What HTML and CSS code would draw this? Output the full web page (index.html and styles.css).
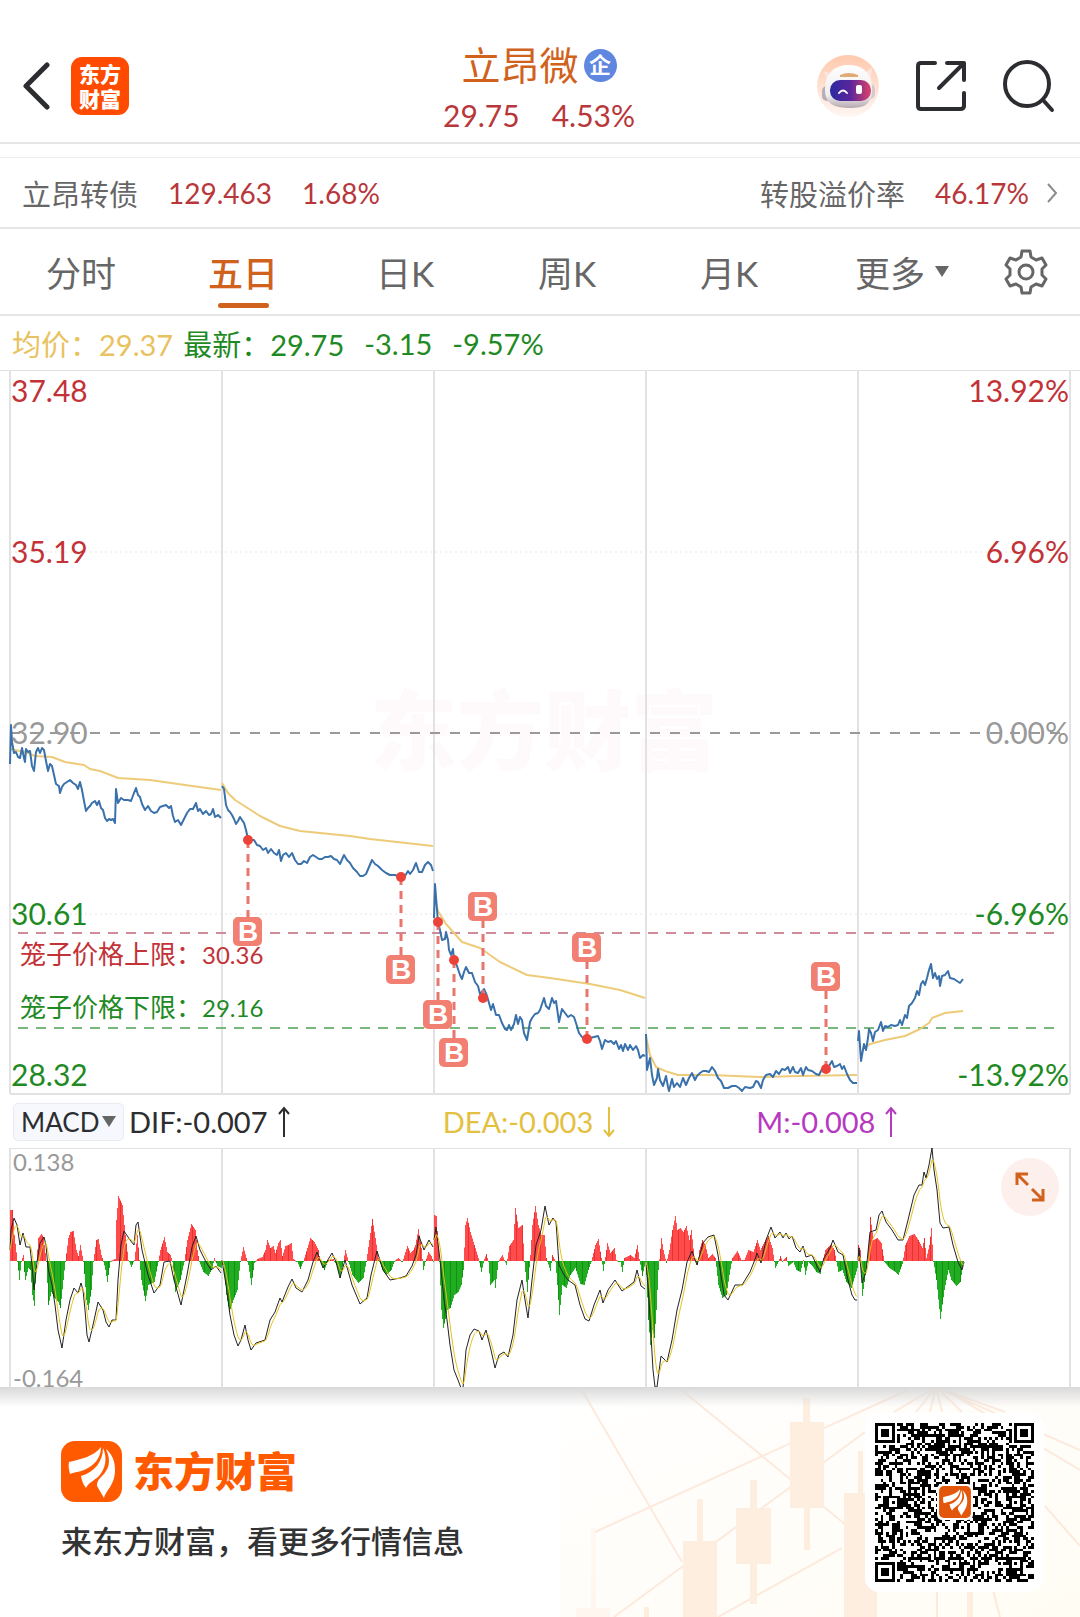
FILE: index.html
```html
<!DOCTYPE html>
<html lang="zh-CN">
<head>
  <meta charset="utf-8">
  <meta name="viewport" content="width=device-width, initial-scale=1">
  <title>立昂微 - 东方财富</title>
  <link rel="stylesheet" href="styles.css">
</head>
<body>
  <header class="topbar">
    <div class="side">
      <button class="icon-btn" aria-label="返回">
        <svg width="28" height="48" viewBox="0 0 28 48"><path d="M25 3 4 24 25 45" fill="none" stroke="#2b2d30" stroke-width="5" stroke-linecap="round" stroke-linejoin="round"/></svg>
      </button>
      <div class="app-badge"><span>东方</span><span>财富</span></div>
    </div>
    <div class="stock">
      <h1>立昂微<span class="tag">企</span></h1>
      <p class="quote up"><span>29.75</span><span>4.53%</span></p>
    </div>
    <div class="side right">
      <button class="icon-btn" aria-label="智能助手">
        <svg width="64" height="64" viewBox="0 0 64 64">
          <defs>
            <linearGradient id="halo" x1="0" y1="0" x2="0" y2="1"><stop offset="0" stop-color="#ffc9ae"/><stop offset="1" stop-color="#fff6f3"/></linearGradient>
            <linearGradient id="shell" x1="0" y1="0" x2="0" y2="1"><stop offset="0" stop-color="#ffffff"/><stop offset=".7" stop-color="#f0ecef"/><stop offset="1" stop-color="#b5a9b0"/></linearGradient>
            <linearGradient id="visor" x1="0" y1="0" x2="1" y2="0"><stop offset="0" stop-color="#2c2aa0"/><stop offset=".5" stop-color="#5b259c"/><stop offset="1" stop-color="#df4368"/></linearGradient>
          </defs>
          <circle cx="32" cy="32" r="31" fill="url(#halo)"/>
          <path d="M8 17q5 1 10 7l-6 7zM56 14q-6 2-9 10l7 7z" fill="#f8e7e2"/>
          <rect x="6" y="32" width="10" height="15" rx="5" fill="#b7adb6"/>
          <rect x="49" y="30" width="10" height="15" rx="5" fill="#d3cbd1"/>
          <path d="M9 36C9 18 20 11 33 11s23 8 23 24-8 19-22 19-25-3-25-18z" fill="url(#shell)"/>
          <path d="M24 21q9-4 18 0v2H24z" fill="#dfac76"/>
          <rect x="14" y="26" width="41" height="21" rx="10" fill="url(#visor)"/>
          <path d="M23 39q4-5 8 0" fill="none" stroke="#fff" stroke-width="2" stroke-linecap="round"/>
          <rect x="40" y="31" width="6" height="9" rx="2" fill="#fff"/>
        </svg>
      </button>
      <button class="icon-btn" aria-label="分享">
        <svg width="52" height="52" viewBox="0 0 52 52"><g fill="none" stroke="#2b2d30" stroke-width="4" stroke-linecap="round" stroke-linejoin="round"><path d="M20 3H6Q3 3 3 6v40q0 3 3 3h39q4 0 4-3V33"/><path d="M32 3h17v17M48 4 24 28"/></g></svg>
      </button>
      <button class="icon-btn" aria-label="搜索">
        <svg width="54" height="54" viewBox="0 0 54 54"><g fill="none" stroke="#2b2d30" stroke-width="4" stroke-linecap="round"><circle cx="25" cy="25" r="22"/><path d="m41 41 9 10"/></g></svg>
      </button>
    </div>
  </header>

  <a class="bond" href="#bond">
    <span class="name">立昂转债</span><span class="up">129.463</span><span class="up">1.68%</span>
    <span class="name push">转股溢价率</span><span class="up">46.17%</span>
    <svg width="12" height="20" viewBox="0 0 12 20"><path d="m2 1 8 9-8 9" fill="none" stroke="#8c8c8c" stroke-width="2"/></svg>
  </a>

  <nav class="tabs">
    <button>分时</button>
    <button class="active">五日</button>
    <button>日K</button>
    <button>周K</button>
    <button>月K</button>
    <button class="more">更多<i class="caret"></i></button>
    <button class="gear" aria-label="设置">
      <svg width="46" height="46" viewBox="0 0 46 46"><g fill="none" stroke="#666" stroke-width="3" stroke-linejoin="round"><path d="M19 2h8l1 6 5 3 6-2 4 7-4 4v6l4 4-4 7-6-2-5 3-1 6h-8l-1-6-5-3-6 2-4-7 4-4v-6l-4-4 4-7 6 2 5-3z"/><circle cx="23" cy="23" r="7"/></g></svg>
    </button>
  </nav>

  <div class="summary">
    <span class="avg">均价：29.37</span>
    <span class="down">最新：29.75</span>
    <span class="down">-3.15</span>
    <span class="down">-9.57%</span>
  </div>

  <svg class="chart" viewBox="0 370 1080 725">
    <text class="watermark" x="544" y="764" text-anchor="middle">东方财富</text>
    <g class="grid">
      <path d="M0 370H1080M10 1094H1070M10 370V1094M222 370V1094M434 370V1094M646 370V1094M858 370V1094M1070 370V1094"/>
      <path class="dots" d="M10 552H1070M10 914H1070"/>
    </g>
    <path class="base-line" d="M10 733H1070"/>
    <path class="limit-up" d="M18 933H1055"/>
    <path class="limit-down" d="M18 1028H1055"/>
    <g class="limit-text">
      <text class="up" x="20" y="964">笼子价格上限：<tspan>30.36</tspan></text>
      <text class="down" x="20" y="1017">笼子价格下限：<tspan>29.16</tspan></text>
    </g>
    <g class="axis">
      <text class="up" x="11" y="402">37.48</text>
      <text class="up" x="11" y="563">35.19</text>
      <text class="flat" x="11" y="744">32.90</text>
      <text class="down" x="11" y="925">30.61</text>
      <text class="down" x="11" y="1086">28.32</text>
    </g>
    <g class="axis" text-anchor="end">
      <text class="up" x="1069" y="402">13.92%</text>
      <text class="up" x="1069" y="563">6.96%</text>
      <text class="flat" x="1069" y="744">0.00%</text>
      <text class="down" x="1069" y="925">-6.96%</text>
      <text class="down" x="1069" y="1086">-13.92%</text>
    </g>
    <g id="avgLines" class="line avg-line"></g>
    <g id="priceLines" class="line price-line"></g>
    <g id="marks"></g>
  </svg>

  <div class="indicator">
    <label class="picker">
      <select aria-label="指标"><option>MACD</option><option>KDJ</option></select>
      <i class="caret"></i>
    </label>
    <div class="values">
      <span class="dif">DIF:-0.007<svg width="14" height="32" viewBox="0 0 14 32"><path d="M7 31V2M2 8l5-6 5 6"/></svg></span>
      <span class="dea">DEA:-0.003<svg width="14" height="32" viewBox="0 0 14 32"><path d="M7 1v29M2 24l5 6 5-6"/></svg></span>
      <span class="macd">M:-0.008<svg width="14" height="32" viewBox="0 0 14 32"><path d="M7 31V2M2 8l5-6 5 6"/></svg></span>
    </div>
  </div>

  <div class="macd-chart">
    <svg class="chart" viewBox="0 1148 1080 239">
      <path class="grid" d="M10 1148H1070M10 1148V1387M222 1148V1387M434 1148V1387M646 1148V1387M858 1148V1387M1070 1148V1387"/>
      <g class="range flat"><text x="13" y="1171">0.138</text><text x="13" y="1387">-0.164</text></g>
      <g id="bars"></g>
      <g id="difLines" class="line dif-line"></g>
      <g id="deaLines" class="line dea-line"></g>
    </svg>
    <button class="expand" aria-label="全屏">
      <svg width="30" height="30" viewBox="0 0 30 30"><path d="M13 2H2v11M3 3l10 10M28 17v11H17M27 27 17 17" fill="none" stroke="#d0621d" stroke-width="3"/></svg>
    </button>
  </div>

  <footer class="promo">
    <svg class="promo-bg" width="520" height="230" viewBox="560 1387 520 230">
      <defs><linearGradient id="warm" x1="0" y1="0" x2="1" y2="1"><stop offset="0" stop-color="#fff"/><stop offset=".5" stop-color="#fffdf9"/><stop offset="1" stop-color="#fffdf3"/></linearGradient></defs>
      <path fill="url(#warm)" d="M560 1387h520v230H560z"/>
      <g fill="none" stroke="#fdeadd" stroke-width="2">
        <path d="M583 1392 682 1562M678 1387 846 1525M595 1532 908 1390M614 1617 865 1432M718 1617 842 1548M935 1387 1080 1450M940 1387 1080 1470M1045 1506 1080 1546M936 1387 894 1412M936 1387 916 1412M936 1387 930 1412M936 1387 942 1412M936 1387 962 1412M936 1387 1005 1412M937 1590V1617M993 1590 1000 1617"/>
      </g>
      <g fill="#feeee0">
        <path d="M803 1398h7v24h14v86h-14v42h-6v-42h-14v-86h13zM750 1480h7v28h14v56h-14v40h-7v-40H736v-56h14zM697 1499h6v42h14v76h-34v-76h14zM858 1451h5v42h14v124h-33V1493h14zM967 1592h6v25h-6zM644 1607h5v10h-5z"/>
        <path opacity=".4" d="M591 1528h5v80h14v9h-34v-9h15z"/>
      </g>
    </svg>
    <div class="brand">
      <div class="brand-row">
        <svg width="61" height="61" viewBox="0 0 61 61">
          <rect width="61" height="61" rx="14" fill="#ff5a00"/>
          <g id="feather" fill="#fff">
            <path d="M8 21C20 18 32 16 40 6 40 17 33 25 23 29 18 31 14 31 9 33 8 29 7 25 8 21z"/>
            <path d="M42 7C42 20 34 31 20 35 21 40 22 43 25 47 27 42 34 39 38 35 44 28 47 18 42 7z"/>
            <path d="M45 8C51 21 47 29 41 35 37 39 36 41 36 45L43 57C45 49 54 44 54 29 54 20 51 13 45 8z"/>
          </g>
        </svg>
        <strong>东方财富</strong>
      </div>
      <p>来东方财富，看更多行情信息</p>
    </div>
    <div class="qr">
      <svg id="qr" width="159" height="159" viewBox="0 0 57 57" role="img" aria-label="二维码"></svg>
      <svg class="qr-logo" width="36" height="36" viewBox="-4 -4 69 69"><rect x="-4" y="-4" width="69" height="69" rx="10" fill="#fff"/><rect width="61" height="61" rx="9" fill="#e2570b"/><use href="#feather"/></svg>
    </div>
  </footer>

  <script>
    // one string per trading day, "x,y x,y ..."
    const price = [
      "10,764 11,725 12,742 14,753 16,752 18,757 20,758 22,748 24,758 25,762 26,749 28,752 30,751 32,766 34,771 36,752 38,748 40,753 42,748 44,750 46,761 48,771 50,764 52,766 54,775 56,784 59,786 60,793 62,787 64,784 67,782 70,780 73,783 76,785 78,789 80,782 82,790 84,801 86,811 88,808 90,806 92,803 95,801 97,805 99,801 101,808 103,810 105,818 107,821 109,819 111,820 113,819 115,823 116,789 118,803 121,798 124,800 128,800 131,801 134,793 136,788 138,795 140,797 142,804 145,810 148,806 151,811 154,813 157,812 160,807 163,806 166,805 169,808 171,806 173,816 175,822 178,820 181,825 184,819 187,813 190,809 193,809 196,803 198,811 200,809 203,814 206,811 209,815 211,814 213,809 215,817 218,815 221,818",
      "222,786 224,789 226,805 228,810 230,812 232,815 234,819 236,824 238,821 240,817 242,820 244,823 246,830 248,839 251,840 254,840 257,845 260,846 263,850 266,848 268,853 271,849 274,853 277,855 279,850 281,861 283,855 286,853 289,857 292,853 295,860 298,864 301,864 304,861 307,863 310,857 313,855 316,857 319,859 322,859 325,857 328,857 331,856 334,859 337,860 340,864 344,855 347,860 350,863 353,868 357,872 360,876 363,876 366,874 369,867 372,860 375,864 378,866 382,870 386,873 390,875 395,875 401,877 405,876 408,871 410,874 413,870 416,863 419,872 422,872 425,865 428,862 431,865 433,871",
      "434,918 435,884 437,910 438,922 440,930 442,940 445,939 446,932 448,940 449,950 451,955 453,949 454,960 457,966 460,975 462,979 464,972 466,967 469,973 472,973 475,982 478,986 480,994 484,989 487,996 489,1003 491,1010 493,1004 496,1015 499,1015 502,1023 505,1029 507,1030 509,1025 511,1030 514,1024 516,1015 518,1024 520,1017 522,1020 524,1033 527,1040 530,1022 532,1018 535,1014 538,1013 540,1010 542,1004 544,998 546,1006 549,1009 552,998 554,1003 556,1001 559,1022 562,1009 565,1013 568,1017 571,1015 574,1017 576,1023 579,1033 582,1037 586,1038 590,1038 594,1037 598,1036 600,1041 602,1049 605,1040 608,1042 611,1041 614,1044 616,1041 619,1049 621,1045 623,1051 625,1044 628,1050 630,1045 633,1050 636,1046 638,1050 640,1058 643,1055 645,1056",
      "646,1034 647,1070 650,1058 652,1075 654,1085 657,1078 658,1069 660,1080 663,1086 666,1076 668,1087 669,1091 672,1079 674,1087 677,1083 680,1087 683,1078 686,1085 689,1078 692,1073 695,1080 697,1076 700,1073 703,1071 706,1071 709,1072 712,1067 715,1071 718,1078 721,1081 724,1088 728,1088 732,1086 736,1086 739,1088 742,1091 745,1087 750,1088 753,1087 756,1081 758,1082 761,1088 763,1080 766,1075 770,1074 773,1077 776,1071 779,1074 782,1069 785,1070 788,1067 790,1073 793,1067 795,1072 798,1073 801,1068 803,1075 806,1067 808,1070 812,1071 816,1074 819,1075 822,1069 826,1068 829,1066 832,1061 834,1067 837,1066 840,1064 842,1069 844,1066 847,1074 850,1080 853,1083 857,1083",
      "858,1041 859,1031 861,1061 864,1044 866,1050 868,1038 869,1029 871,1033 873,1041 875,1032 878,1030 881,1022 883,1031 885,1026 888,1027 891,1025 895,1026 898,1025 900,1020 902,1025 905,1015 907,1018 909,1006 912,1003 915,998 917,991 919,995 921,984 923,981 925,985 927,978 929,970 931,964 933,978 935,973 937,979 939,976 940,986 942,976 945,975 948,971 950,978 954,979 957,981 960,983 963,979"
    ];
    const average = [
      "10,749 25,752 35,756 52,757 65,762 84,765 90,769 100,771 118,778 150,780 185,785 221,790",
      "222,783 228,793 235,800 246,807 260,816 280,826 300,831 320,833 350,836 370,839 433,846",
      "434,895 438,911 446,924 462,942 480,948 500,962 527,975 550,978 590,984 620,990 645,998",
      "646,1036 650,1055 656,1067 665,1071 678,1075 710,1075 760,1077 800,1076 857,1075",
      "866,1047 870,1044 885,1040 905,1036 920,1029 929,1023 932,1018 945,1013 963,1011"
    ];
    const dif = [
      "10,1250 11,1230 14,1218 17,1225 20,1245 23,1233 26,1247 30,1247 32,1265 34,1290 37,1262 40,1243 44,1237 46,1245 48,1268 52,1285 55,1305 58,1330 62,1348 66,1320 70,1300 74,1288 78,1293 81,1283 83,1290 85,1310 87,1335 89,1342 93,1325 98,1302 103,1310 106,1322 109,1327 112,1320 116,1320 118,1280 121,1245 124,1231 130,1240 134,1245 136,1225 138,1222 142,1250 148,1275 154,1293 160,1285 164,1262 170,1261 174,1280 181,1305 187,1275 192,1247 196,1236 200,1250 206,1262 211,1270 216,1266 221,1273",
      "222,1260 226,1285 230,1315 234,1335 238,1346 241,1340 245,1325 248,1340 251,1350 256,1343 265,1340 270,1320 275,1312 280,1298 282,1302 288,1287 292,1279 296,1288 302,1292 308,1280 313,1262 317,1252 323,1268 332,1253 336,1262 340,1278 345,1260 352,1285 360,1304 367,1298 371,1275 377,1251 383,1270 390,1280 400,1278 406,1276 412,1266 416,1255 419,1236 424,1250 429,1240 433,1247",
      "434,1240 436,1227 440,1260 444,1300 447,1320 450,1345 454,1370 458,1380 461,1388 463,1388 466,1350 470,1335 474,1329 479,1331 482,1340 486,1330 491,1350 495,1368 499,1355 504,1352 508,1357 513,1335 517,1300 522,1280 525,1300 528,1318 532,1280 536,1245 541,1230 545,1206 549,1225 553,1218 556,1222 559,1265 564,1275 568,1280 575,1285 580,1305 585,1319 589,1321 594,1305 600,1290 603,1303 608,1290 615,1280 622,1291 630,1285 634,1282 637,1270 641,1286 645,1289",
      "646,1262 649,1300 653,1370 655,1387 657,1387 661,1356 667,1362 672,1340 677,1310 682,1290 687,1262 692,1251 697,1265 703,1243 708,1237 714,1235 718,1255 724,1295 728,1300 735,1285 742,1285 750,1272 754,1262 757,1253 761,1263 766,1240 771,1227 775,1238 780,1232 783,1238 786,1233 789,1239 792,1236 796,1248 800,1252 803,1246 806,1257 812,1255 817,1266 820,1272 824,1258 830,1248 833,1240 838,1252 843,1255 848,1280 852,1295 855,1300 857,1300",
      "858,1260 859,1248 861,1270 862,1283 866,1272 870,1232 876,1230 879,1215 882,1211 886,1222 892,1230 898,1240 903,1240 908,1220 914,1195 919,1185 922,1185 924,1172 926,1178 929,1165 932,1148 934,1170 937,1190 940,1223 943,1228 949,1227 953,1245 958,1262 962,1270 964,1262"
    ];
    const hist = [
      "10,1210 12,1210 14,1235 17,1261 19,1280 21,1261 23,1255 24,1272 25,1280 28,1268 30,1270 32,1295 34,1306 36,1261 38,1238 41,1234 43,1237 46,1261 48,1305 51,1292 54,1298 58,1302 60,1308 63,1280 65,1261 68,1238 70,1232 73,1231 76,1250 78,1256 80,1245 83,1261 86,1300 88,1310 91,1290 93,1261 96,1240 98,1239 101,1255 103,1261 105,1270 107,1282 110,1261 115,1259 116,1220 118,1196 122,1205 125,1235 128,1260 131,1267 134,1260 137,1235 139,1260 141,1280 145,1301 148,1285 154,1282 158,1261 160,1250 164,1237 167,1252 170,1255 172,1261 175,1292 180,1280 184,1261 187,1240 191,1224 195,1230 197,1250 199,1262 203,1272 208,1276 212,1268 214,1258 217,1266 221,1268",
      "223,1265 226,1295 229,1312 233,1300 237,1290 240,1261 243,1247 246,1258 248,1265 251,1285 254,1263 257,1259 262,1257 265,1250 267,1240 270,1248 273,1246 275,1253 278,1243 280,1240 282,1256 285,1246 288,1245 291,1243 293,1259 297,1262 300,1269 303,1261 307,1248 310,1238 314,1242 318,1250 320,1262 324,1270 328,1260 333,1259 336,1265 340,1278 343,1261 345,1250 348,1261 352,1275 358,1283 363,1278 366,1261 369,1240 372,1219 375,1238 378,1258 382,1270 386,1275 391,1270 394,1261 398,1258 402,1262 405,1252 407,1246 410,1253 413,1250 415,1245 418,1229 421,1248 423,1270 425,1262 428,1252 431,1256 433,1262",
      "434,1215 436,1216 439,1261 441,1310 443,1328 447,1310 450,1308 454,1295 458,1292 461,1285 463,1270 465,1225 467,1218 470,1232 474,1245 478,1258 481,1272 484,1259 486,1254 488,1262 490,1285 494,1280 495,1288 498,1261 502,1255 506,1265 509,1246 513,1240 515,1208 518,1228 522,1225 524,1262 527,1292 530,1255 532,1225 535,1206 538,1225 541,1235 544,1235 546,1258 550,1271 552,1255 555,1261 557,1285 559,1315 562,1285 566,1288 570,1275 575,1268 580,1284 584,1285 588,1270 591,1261 595,1245 598,1239 601,1258 603,1271 607,1243 610,1253 614,1248 616,1260 620,1262 622,1272 624,1258 630,1255 634,1258 637,1245 639,1259 642,1276 645,1262",
      "646,1275 648,1320 650,1345 652,1330 654,1338 656,1310 658,1270 661,1238 663,1250 666,1263 669,1250 672,1230 675,1216 677,1230 680,1228 683,1232 686,1226 689,1240 691,1230 694,1258 697,1265 699,1250 702,1240 705,1245 708,1258 712,1254 715,1258 718,1285 722,1298 726,1295 729,1275 732,1258 737,1251 741,1260 744,1260 748,1250 753,1252 757,1240 760,1250 764,1242 768,1236 772,1248 775,1268 778,1262 780,1256 782,1261 786,1257 788,1266 793,1262 796,1270 800,1272 803,1260 805,1275 808,1262 812,1266 816,1272 820,1274 822,1262 825,1250 828,1247 831,1244 834,1250 836,1261 838,1272 842,1270 846,1282 851,1288 855,1275 857,1268",
      "858,1245 860,1250 862,1296 865,1275 867,1261 869,1235 870,1217 873,1240 877,1238 881,1243 884,1262 889,1268 895,1272 898,1275 902,1264 905,1245 909,1236 914,1234 918,1240 922,1248 924,1238 926,1258 929,1245 931,1228 933,1261 936,1280 940,1319 944,1290 948,1270 951,1280 956,1286 960,1282 963,1261"
    ];
    // dot x, dot y, badge centre y
    const buys = [[248,840,931],[401,877,969],[438,922,1014],[454,960,1052],[483,998,906],[587,1039,947],[826,1069,976]];
    const ZERO = 1261;

    const byId = id => document.getElementById(id);
    const lines = days => days.map(d => `<polyline points="${d}"/>`).join("");

    // linear samples, one per pixel column
    function sample(day) {
      const pts = day.split(" ").map(p => p.split(",").map(Number));
      const out = [];
      for (let i = 1; i < pts.length; i++) {
        const [x0, y0] = pts[i - 1], [x1, y1] = pts[i];
        for (let x = x0; x < x1; x++) out.push([x, y0 + (y1 - y0) * (x - x0) / (x1 - x0)]);
      }
      out.push(pts[pts.length - 1]);
      return out;
    }

    function smooth(day) {
      const pts = sample(day);
      let v = pts[0][1];
      return pts.map(([x, y]) => {
        v += (y - v) * 0.28;
        return x + "," + v.toFixed(1);
      }).join(" ");
    }

    byId("priceLines").innerHTML = lines(price);
    byId("avgLines").innerHTML = lines(average);
    byId("difLines").innerHTML = lines(dif);
    byId("deaLines").innerHTML = lines(dif.map(smooth));

    byId("bars").innerHTML = hist.map(day => sample(day).map(([x, y]) => {
      const top = Math.min(y, ZERO), h = Math.max(1, Math.abs(y - ZERO));
      const tone = (y < ZERO ? "bar-up" : "bar-down") + (x % 6 === 0 ? " deep" : "");
      return `<rect class="${tone}" x="${x}" y="${top}" width="1" height="${h}"/>`;
    }).join("")).join("");

    byId("marks").innerHTML = buys.map(([x, y, by]) => `
      <path class="stem" d="M${x} ${y}V${by > y ? by - 14 : by + 14}"/>
      <circle class="dot" cx="${x}" cy="${y}" r="5"/>
      <rect class="buy" x="${x - 15}" y="${by - 14}" width="29" height="29" rx="5"/>
      <text class="buy-text" x="${x}" y="${by + 10}" text-anchor="middle">B</text>`).join("");

    // QR code, 57 modules a side
    function drawQr() {
      const n = 57;
      let seed = 20240, d = "";
      const ring = (x, y, cx, cy) => Math.max(Math.abs(x - cx), Math.abs(y - cy));
      for (let y = 0; y < n; y++) {
        for (let x = 0; x < n; x++) {
          seed = (seed * 1103515245 + 12345) % 2147483648;
          let on = seed / 2147483648 < 0.5;
          for (const [cx, cy] of [[28,6],[6,28],[50,28],[28,50],[50,50]]) {
            const r = ring(x, y, cx, cy);
            if (r <= 2) on = r !== 1;
          }
          for (const [cx, cy] of [[3,3],[53,3],[3,53]]) {
            const r = ring(x, y, cx, cy);
            if (r <= 4) on = r !== 4 && r !== 2;
          }
          if (on) d += `M${x} ${y}h1v1h-1z`;
        }
      }
      byId("qr").innerHTML = `<path d="${d}" shape-rendering="crispEdges"/>`;
    }
    drawQr();
  </script>
</body>
</html>
```

FILE: styles.css
```css
* { box-sizing: border-box; }
body {
  margin: 0; background: #fff; color: #333;
  font-family: Lato, "Noto Sans CJK SC", sans-serif;
}
button { border: 0; padding: 0; background: none; font: inherit; color: inherit; }
h1, p { margin: 0; }
svg { display: block; }
.up { color: #b8373b; fill: #c23237; }
.down { color: #1f8a24; fill: #1f8a24; }
.flat { fill: #999; }
.caret {
  display: inline-block;
  border: 7px solid transparent; border-top: 11px solid #666; border-bottom: 0;
}

.topbar {
  display: grid; grid-template-columns: 1fr auto 1fr; align-items: center;
  height: 144px; padding: 30px 24px 0 22px; border-bottom: 2px solid #e4e6e7;
}
.side { display: flex; align-items: center; gap: 21px; }
.side.right { justify-content: flex-end; gap: 35px; }
.app-badge {
  display: flex; flex-direction: column; align-items: center; justify-content: center;
  width: 58px; height: 58px; border-radius: 11px;
  background: #ff4a00; color: #fff; font-size: 21px; font-weight: 900; line-height: 25px;
}
.stock { padding-top: 8px; text-align: center; }
.stock h1 {
  display: flex; align-items: center; justify-content: center; gap: 5px;
  font-size: 39px; line-height: 50px; font-weight: 400; color: #d0621d;
}
.tag {
  width: 33px; height: 33px; border-radius: 50%;
  background: #5f87e0; color: #fff; font-size: 22px; line-height: 32px; font-weight: 700;
}
.quote { display: flex; justify-content: center; gap: 32px; font-size: 30px; line-height: 50px; }

.bond {
  display: flex; align-items: center; gap: 30px;
  height: 72px; margin-top: 13px; padding: 0 22px;
  border-top: 1px solid #eceeee; border-bottom: 2px solid #e4e6e7;
  color: #666; font-size: 28px; text-decoration: none;
}
.bond .name { font-size: 29px; }
.bond .push { margin-left: auto; }
.bond svg { margin-left: -13px; }

.tabs {
  display: grid; grid-template-columns: repeat(6, 3fr) 2fr; height: 87px;
  border-bottom: 2px solid #e4e6e7; color: #666; font-size: 35px;
}
.tabs button { position: relative; display: flex; align-items: center; justify-content: center; gap: 10px; }
.tabs .more { padding-left: 22px; }
.tabs .active { color: #d0621d; font-weight: 500; }
.tabs .active::after {
  content: ""; position: absolute; left: 50%; bottom: 6px;
  width: 51px; height: 5px; margin-left: -25px; border-radius: 3px; background: #d0621d;
}

.summary { display: flex; align-items: center; gap: 20px; height: 54px; padding: 0 12px; font-size: 29px; }
.summary .avg { color: #e8c260; margin-right: -10px; }

.chart { width: 100%; height: auto; }
.grid { fill: none; stroke: #e2e2e4; stroke-width: 2; }
.dots { stroke: #e6e6e6; stroke-width: 1; stroke-dasharray: 2 3; }
.watermark { font-size: 87px; font-weight: 900; fill: #fefafc; }
.base-line { stroke: #999; stroke-width: 2; stroke-dasharray: 10 10; }
.limit-up { stroke: #ce8b98; stroke-width: 2; stroke-dasharray: 10 8; }
.limit-down { stroke: #79b87c; stroke-width: 2; stroke-dasharray: 10 8; }
.limit-text { font-size: 26px; }
.limit-text tspan, .range { font-size: 24px; }
.axis { font-size: 30px; }
.line { fill: none; stroke-linejoin: round; }
.price-line { stroke: #3a71ab; stroke-width: 2; }
.avg-line { stroke: #edcb79; stroke-width: 2; }
.stem { stroke: #e8766c; stroke-width: 3; stroke-dasharray: 8 6; }
.dot { fill: #eb4339; }
.buy { fill: #f17f72; }
.buy-text { fill: #fff; font-family: "Liberation Sans", sans-serif; font-size: 28px; font-weight: 700; }

.indicator { display: flex; align-items: center; height: 53px; padding: 0 10px 0 13px; font-size: 29px; }
.picker {
  display: flex; align-items: center; width: 111px; height: 38px; padding: 0 7px;
  border: 1px solid #e8ebf2; border-radius: 5px; background: #f6f8fd;
}
.picker select {
  flex: 1; width: 80px; padding: 0; border: 0; background: none;
  appearance: none; font: inherit; font-size: 26px; color: #2b2d30;
}
.values { flex: 1; display: grid; grid-template-columns: repeat(3, 1fr); margin-left: 5px; }
.values span { display: flex; align-items: center; gap: 9px; }
.values svg { fill: none; stroke: currentColor; stroke-width: 2; }
.dif { color: #2b2d30; }
.dea { color: #e3c03f; }
.macd { color: #b63ac0; }

.macd-chart { position: relative; overflow: hidden; }
.bar-up { fill: #ff4b4b; }
.bar-down { fill: #22ac22; }
.bar-up.deep { fill: #e83232; }
.bar-down.deep { fill: #0f9210; }
.dif-line { stroke: #222; stroke-width: 1; }
.dea-line { stroke: #e6c21c; stroke-width: 1; }
.expand {
  position: absolute; right: 21px; top: 10px;
  display: flex; align-items: center; justify-content: center;
  width: 58px; height: 58px; border-radius: 50%; background: #fdf0ec;
}

.promo {
  position: relative; display: flex; justify-content: space-between; align-items: center;
  height: 230px; padding: 0 36px 0 61px; overflow: hidden;
}
.promo::before {
  content: ""; position: absolute; left: 0; right: 0; top: 0; height: 20px; z-index: 1;
  background: linear-gradient(#d9d9d9, rgba(255, 255, 255, 0));
}
.promo-bg { position: absolute; right: 0; top: 0; }
.brand { position: relative; }
.brand-row { display: flex; align-items: center; gap: 11px; }
.brand-row strong { font-size: 41px; line-height: 61px; font-weight: 900; color: #ff5a00; }
.brand p { margin-top: 16px; font-size: 31px; line-height: 46px; font-weight: 500; color: #333; }
.qr { position: relative; padding: 10px; border-radius: 14px; background: #fff; }
.qr-logo { position: absolute; left: 50%; top: 50%; margin: -18px 0 0 -18px; }
```
